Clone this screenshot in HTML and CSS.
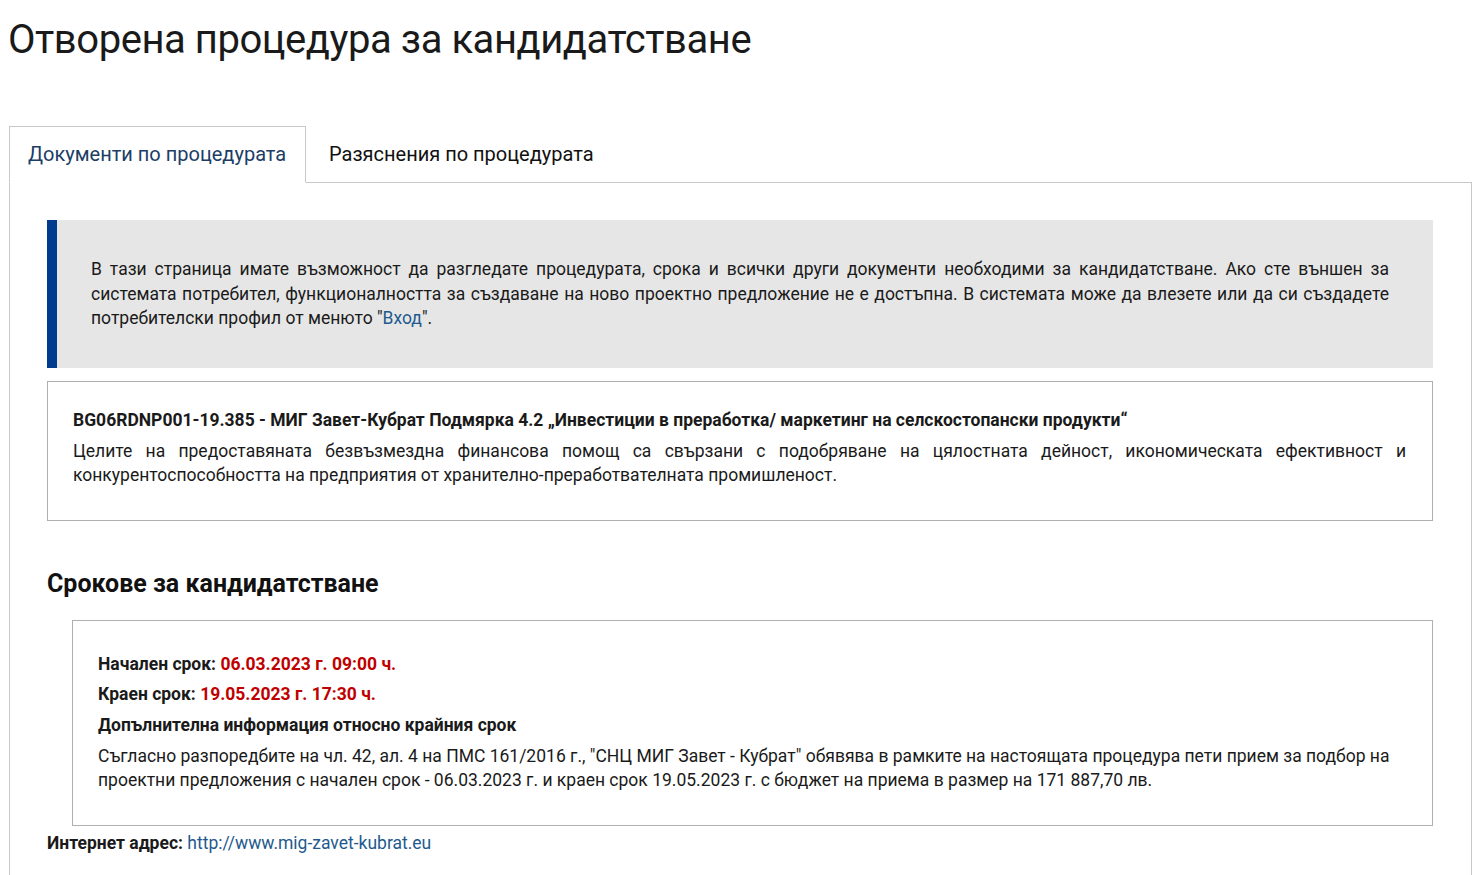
FILE: index.html
```html
<!DOCTYPE html>
<html lang="bg">
<head>
<meta charset="utf-8">
<title>Отворена процедура за кандидатстване</title>
<link rel="stylesheet" href="styles.css">
</head>
<body>
<div class="page">
  <h1 class="page-title">Отворена процедура за кандидатстване</h1>
  <div class="tabs">
    <div class="tab tab-active">Документи по процедурата</div>
    <div class="tab">Разяснения по процедурата</div>
    <div class="tab-fill"></div>
  </div>
  <div class="panel">
    <div class="notice">
      <p>В тази страница имате възможност да разгледате процедурата, срока и всички други документи необходими за кандидатстване. Ако сте външен за системата потребител, функционалността за създаване на ново проектно предложение не е достъпна. В системата може да влезете или да си създадете потребителски профил от менюто "<a href="#" class="link">Вход</a>".</p>
    </div>
    <div class="procedure">
      <div class="procedure-title">BG06RDNP001-19.385 - МИГ Завет-Кубрат Подмярка 4.2 „Инвестиции в преработка/ маркетинг на селскостопански продукти“</div>
      <p class="procedure-desc">Целите на предоставяната безвъзмездна финансова помощ са свързани с подобряване на цялостната дейност, икономическата ефективност и конкурентоспособността на предприятия от хранително-преработвателната промишленост.</p>
    </div>
    <h2 class="section-title">Срокове за кандидатстване</h2>
    <div class="deadlines">
      <div class="dl-row"><b>Начален срок:</b> <span class="date">06.03.2023 г. 09:00 ч.</span></div>
      <div class="dl-row"><b>Краен срок:</b> <span class="date">19.05.2023 г. 17:30 ч.</span></div>
      <div class="dl-row"><b>Допълнителна информация относно крайния срок</b></div>
      <p class="dl-text">Съгласно разпоредбите на чл. 42, ал. 4 на ПМС 161/2016 г., "СНЦ МИГ Завет - Кубрат" обявява в рамките на настоящата процедура пети прием за подбор на проектни предложения с начален срок - 06.03.2023 г. и краен срок 19.05.2023 г. с бюджет на приема в размер на 171 887,70 лв.</p>
    </div>
    <div class="web"><b>Интернет адрес:</b> <a href="#" class="link">http://www.mig-zavet-kubrat.eu</a></div>
  </div>
</div>
</body>
</html>
```

FILE: styles.css
```css
html, body {
  margin: 0;
  padding: 0;
  background: #ffffff;
}
body {
  font-family: Roboto, "Noto Sans", "Liberation Sans", sans-serif;
  color: #1a1a1a;
  font-size: 17.5px;
}
.page {
  padding: 0 10px 0 9px;
}
.page-title {
  margin: 0;
  padding: 16px 0 0 0;
  font-size: 40px;
  font-weight: 400;
  line-height: 48px;
  height: 110px;
  margin-left: -1px;
  color: #1a1a1a;
  letter-spacing: -0.45px;
}
.tabs {
  display: flex;
  align-items: flex-end;
}
.tab {
  font-size: 20px;
  line-height: 24px;
  padding: 15px 22px 16px 23px;
  color: #111;
  border-bottom: 1px solid #c8c8c8;
  white-space: nowrap;
}
.tab-active {
  color: #1b3d66;
  border: 1px solid #c8c8c8;
  border-bottom: 1px solid transparent;
  padding: 15px 19px 16px 18px;
  width: 258px;
}
.tab-fill {
  flex: 1;
  border-bottom: 1px solid #c8c8c8;
}
.panel {
  border: 1px solid #c8c8c8;
  border-top: none;
  padding: 37px 38px 30px 37px;
}
.notice {
  background: #e6e6e6;
  border-left: 10px solid #003b8e;
  padding: 37px 44px 37px 34px;
}
.notice p {
  margin: 0;
  line-height: 24.5px;
  text-align: justify;
}
.link {
  color: #1f5a8e;
  text-decoration: none;
}
.procedure {
  margin-top: 13px;
  border: 1px solid #b0b0b0;
  padding: 26px 26px 33px 25px;
}
.procedure-title {
  font-weight: 700;
  line-height: 24px;
  margin-bottom: 7px;
}
.procedure-desc {
  margin: 0;
  line-height: 24px;
  text-align: justify;
}
.section-title {
  margin: 47px 0 0 0;
  font-size: 25px;
  font-weight: 700;
  line-height: 32px;
  color: #111;
}
.deadlines {
  margin: 20px 0 0 25px;
  border: 1px solid #b0b0b0;
  padding: 31px 26px 33px 25px;
}
.dl-row {
  line-height: 24px;
  margin-bottom: 6.5px;
}
.dl-row:nth-child(2) {
  margin-bottom: 7px;
}
.date {
  color: #c00000;
  font-weight: 700;
}
.dl-text {
  margin: 0;
  line-height: 24px;
}
.web {
  margin-top: 5px;
  line-height: 24px;
}
```
